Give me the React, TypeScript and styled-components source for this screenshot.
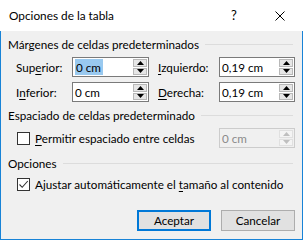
import styled, { createGlobalStyle } from "styled-components";

const GlobalStyle = createGlobalStyle`
  html, body {
    margin: 0;
    padding: 0;
    background: #ffffff;
  }
  body {
    font-family: Lato, "Noto Sans", "Liberation Sans", sans-serif;
    font-size: 11.7px;
    color: #000000;
  }
`;

const Dialog = styled.div`
  width: 303px;
  height: 240px;
  display: flex;
  flex-direction: column;
  box-sizing: border-box;
`;

const TitleBar = styled.div`
  height: 31px;
  flex: none;
  display: flex;
  align-items: center;
  padding-left: 9px;
  background: #ffffff;
`;

const TitleText = styled.div`
  flex: 1;
  font-size: 11.8px;
  padding-bottom: 1px;
`;

const HelpButton = styled.div`
  width: 46px;
  text-align: center;
  font-size: 13px;
  padding-bottom: 1px;
`;

const CloseButton = styled.div`
  width: 46px;
  display: flex;
  justify-content: center;
  align-items: center;
`;

const Body = styled.div`
  flex: 1;
  background: #f0f0f0;
  border: 1px solid #1883d7;
  border-top: none;
  padding: 5px 7px 0 7px;
  display: flex;
  flex-direction: column;
`;

const SectionHeader = styled.div`
  display: flex;
  align-items: center;
  gap: 6px;
  height: 16px;
  line-height: 16px;
  margin-right: 2px;
  white-space: nowrap;
  &::after {
    content: "";
    flex: 1;
    height: 1px;
    background: #dcdcdc;
  }
`;

const MarginGrid = styled.div`
  display: grid;
  grid-template-columns: 56px 77px 70px 76px;
  row-gap: 5px;
  padding-left: 8px;
  margin-top: 5px;
  align-items: center;
`;

const Label = styled.label<{ indent?: boolean }>`
  white-space: nowrap;
  padding-left: ${({ indent }) => (indent ? "9px" : "0")};
`;

const Key = styled.span`
  text-decoration: underline;
  text-underline-offset: 2px;
`;

const Field = styled.div<{ disabled?: boolean }>`
  height: 20px;
  box-sizing: border-box;
  border: 1px solid ${({ disabled }) => (disabled ? "#cccccc" : "#7a7a7a")};
  background: ${({ disabled }) => (disabled ? "#f0f0f0" : "#ffffff")};
  display: flex;
  align-items: stretch;
  padding: 1px;
`;

const FieldValue = styled.div<{ disabled?: boolean }>`
  flex: 1;
  display: flex;
  align-items: center;
  padding-left: 1px;
  color: ${({ disabled }) => (disabled ? "#8a8a8a" : "#000000")};
`;

const Selected = styled.span`
  background: #99c9ef;
  padding: 0 2px 0 1px;
  line-height: 16px;
`;

const Spin = styled.div`
  width: 14px;
  display: flex;
  flex-direction: column;
  gap: 1px;
`;

const SpinHalf = styled.div<{ disabled?: boolean }>`
  flex: 1;
  box-sizing: border-box;
  border: 1px solid ${({ disabled }) => (disabled ? "#e0e0e0" : "#b8b8b8")};
  background: ${({ disabled }) => (disabled ? "#f4f4f4" : "#e6e6e6")};
  display: flex;
  align-items: center;
  justify-content: center;
`;

const SpacingRow = styled.div`
  display: flex;
  align-items: center;
  padding-left: 9px;
  margin-top: 5px;
  height: 20px;
`;

const CheckRow = styled.label`
  display: flex;
  align-items: center;
  gap: 5px;
  flex: 1;
  white-space: nowrap;
`;

const Box = styled.span`
  width: 13px;
  height: 13px;
  box-sizing: border-box;
  border: 1px solid #333333;
  background: #ffffff;
  display: flex;
  align-items: center;
  justify-content: center;
  flex: none;
`;

const SmallField = styled.div`
  width: 76px;
`;

const Gap = styled.div<{ h: number }>`
  height: ${({ h }) => h}px;
  flex: none;
`;

const OptionRow = styled.div`
  display: flex;
  align-items: center;
  padding-left: 9px;
  margin-top: 6px;
  height: 14px;
`;

const Buttons = styled.div`
  display: flex;
  justify-content: flex-end;
  gap: 10px;
  margin-top: 19px;
`;

const Button = styled.div<{ primary?: boolean }>`
  width: 74px;
  height: 21px;
  box-sizing: border-box;
  background: #e1e1e1;
  border: ${({ primary }) => (primary ? "2px solid #0078d7" : "1px solid #adadad")};
  display: flex;
  align-items: center;
  justify-content: center;
  padding-bottom: 1px;
`;

const Arrow = ({ up, color }: { up?: boolean; color: string }) => (
  <svg width="7" height="4" viewBox="0 0 7 4">
    <path d={up ? "M0 4 L3.5 0 L7 4 Z" : "M0 0 L3.5 4 L7 0 Z"} fill={color} />
  </svg>
);

const SpinBox = ({ disabled }: { disabled?: boolean }) => {
  const c = disabled ? "#bfbfbf" : "#000000";
  return (
    <Spin>
      <SpinHalf disabled={disabled}>
        <Arrow up color={c} />
      </SpinHalf>
      <SpinHalf disabled={disabled}>
        <Arrow color={c} />
      </SpinHalf>
    </Spin>
  );
};

const NumberField = ({
  value,
  selected,
  disabled,
}: {
  value: string;
  selected?: boolean;
  disabled?: boolean;
}) => (
  <Field disabled={disabled}>
    <FieldValue disabled={disabled}>
      {selected ? <Selected>{value}</Selected> : value}
    </FieldValue>
    <SpinBox disabled={disabled} />
  </Field>
);

export default function App() {
  return (
    <Dialog>
      <GlobalStyle />
      <TitleBar>
        <TitleText>Opciones de la tabla</TitleText>
        <HelpButton>?</HelpButton>
        <CloseButton>
          <svg width="10" height="10" viewBox="0 0 10 10">
            <path d="M0.5 0.5 L9.5 9.5 M9.5 0.5 L0.5 9.5" stroke="#000" strokeWidth="1" />
          </svg>
        </CloseButton>
      </TitleBar>
      <Body>
        <SectionHeader>Márgenes de celdas predeterminados</SectionHeader>
        <MarginGrid>
          <Label>
            Sup<Key>e</Key>rior:
          </Label>
          <NumberField value="0 cm" selected />
          <Label indent>
            <Key>I</Key>zquierdo:
          </Label>
          <NumberField value="0,19 cm" />
          <Label>
            I<Key>n</Key>ferior:
          </Label>
          <NumberField value="0 cm" />
          <Label indent>
            <Key>D</Key>erecha:
          </Label>
          <NumberField value="0,19 cm" />
        </MarginGrid>
        <Gap h={5} />
        <SectionHeader>Espaciado de celdas predeterminado</SectionHeader>
        <SpacingRow>
          <CheckRow>
            <Box />
            <span>
              <Key>P</Key>ermitir espaciado entre celdas
            </span>
          </CheckRow>
          <SmallField>
            <NumberField value="0 cm" disabled />
          </SmallField>
        </SpacingRow>
        <Gap h={7} />
        <SectionHeader>Opciones</SectionHeader>
        <OptionRow>
          <CheckRow>
            <Box>
              <svg width="11" height="11" viewBox="0 0 11 11">
                <path d="M1.5 5.5 L4.2 8.3 L9.8 2" fill="none" stroke="#333" strokeWidth="1.1" />
              </svg>
            </Box>
            <span>
              Ajustar automáticamente el <Key>t</Key>amaño al contenido
            </span>
          </CheckRow>
        </OptionRow>
        <Buttons>
          <Button primary>Aceptar</Button>
          <Button>Cancelar</Button>
        </Buttons>
      </Body>
    </Dialog>
  );
}
